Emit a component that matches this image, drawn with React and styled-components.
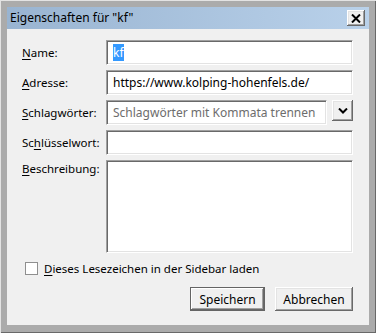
import React from "react";
import styled, { createGlobalStyle } from "styled-components";

const Global = createGlobalStyle`
  html, body {
    margin: 0;
    padding: 0;
    background: #ababab;
  }
  * {
    box-sizing: border-box;
  }
`;

const Window = styled.div`
  width: 376px;
  height: 333px;
  background: #ababab;
  padding: 7px 7px 8px 7px;
  display: flex;
  flex-direction: column;
  box-shadow: inset 1px 1px #e3e3e3, inset -1px -1px #696969;
  font-family: "Noto Sans", "Open Sans", sans-serif;
  font-size: 11.5px;
  color: #000;
`;

const TitleBar = styled.div`
  height: 22px;
  display: flex;
  align-items: center;
  justify-content: space-between;
  padding: 0 4px 0 3px;
  background: linear-gradient(to right, #99b4d1, #b9d1ea);
`;

const Title = styled.span`
  font-size: 12px;
  line-height: 1;
`;

const CloseButton = styled.button`
  width: 18px;
  height: 16px;
  padding: 0;
  margin: 0;
  display: flex;
  align-items: center;
  justify-content: center;
  background: #f0f0f0;
  border: none;
  box-shadow: inset -1px -1px #696969, inset 1px 1px #ffffff,
    inset -2px -2px #a0a0a0, inset 2px 2px #e3e3e3;
`;

const Content = styled.div`
  flex: 1;
  background: #f0f0f0;
  padding: 11px 16px 14px 15px;
  display: flex;
  flex-direction: column;
`;

const Form = styled.div`
  display: grid;
  grid-template-columns: 84px 1fr;
  row-gap: 5px;
`;

const Label = styled.label`
  display: flex;
  align-items: ${(p) => (p.$top ? "flex-start" : "center")};
  padding-top: ${(p) => (p.$top ? "1px" : "0")};
  white-space: nowrap;
`;

const Key = styled.span`
  text-decoration: underline;
  text-underline-offset: 2px;
`;

const Field = styled.div`
  height: ${(p) => p.$h || 25}px;
  background: #fff;
  border-top: 1px solid #a0a0a0;
  border-left: 1px solid #a0a0a0;
  border-bottom: 1px solid #ffffff;
  border-right: 1px solid #ffffff;
  box-shadow: inset 1px 1px #696969, inset -1px -1px #e3e3e3;
  padding: 0 6px;
  display: flex;
  align-items: ${(p) => (p.$h ? "flex-start" : "center")};
  flex: 1;
  min-width: 0;
  white-space: nowrap;
  overflow: hidden;
  font-size: 12px;
  color: ${(p) => (p.$placeholder ? "#6d6d6d" : "#000")};
`;

const Selected = styled.span`
  background: #3399ff;
  color: #fff;
`;

const TagRow = styled.div`
  display: flex;
  gap: 5px;
  align-items: flex-start;
`;

const DropButton = styled.button`
  width: 21px;
  height: 21px;
  padding: 0;
  margin: 0;
  display: flex;
  align-items: center;
  justify-content: center;
  background: #f0f0f0;
  border: none;
  box-shadow: inset -1px -1px #696969, inset 1px 1px #ffffff,
    inset -2px -2px #a0a0a0, inset 2px 2px #e3e3e3;
`;

const CheckRow = styled.div`
  display: flex;
  align-items: center;
  gap: 6px;
  margin: 8px 0 0 3px;
`;

const CheckBox = styled.span`
  width: 13px;
  height: 13px;
  background: #fff;
  border: 1px solid #8f8f8f;
`;

const Buttons = styled.div`
  display: flex;
  justify-content: flex-end;
  gap: 10px;
  margin-top: auto;
`;

const Button = styled.button`
  height: 24px;
  width: ${(p) => p.$w}px;
  padding: 0;
  margin: 0;
  font: inherit;
  font-size: 12px;
  background: #f0f0f0;
  border: none;
  box-shadow: ${(p) =>
    p.$default
      ? "inset 0 0 0 1px #646464, inset -2px -2px #696969, inset 2px 2px #ffffff, inset -3px -3px #a0a0a0"
      : "inset -1px -1px #696969, inset 1px 1px #ffffff, inset -2px -2px #a0a0a0, inset 2px 2px #e3e3e3"};
`;

export default function App() {
  return (
    <>
      <Global />
      <Window>
        <TitleBar>
          <Title>Eigenschaften für "kf"</Title>
          <CloseButton>
            <svg width="10" height="9" viewBox="0 0 10 9">
              <path d="M1 0.5 L9 8.5 M9 0.5 L1 8.5" stroke="#000" strokeWidth="2" />
            </svg>
          </CloseButton>
        </TitleBar>
        <Content>
          <Form>
            <Label>
              <Key>N</Key>ame:
            </Label>
            <Field>
              <Selected>kf</Selected>
            </Field>
            <Label>
              <Key>A</Key>dresse:
            </Label>
            <Field>https://www.kolping-hohenfels.de/</Field>
            <Label>
              <Key>S</Key>chlagwörter:
            </Label>
            <TagRow>
              <Field $placeholder>Schlagwörter mit Kommata trennen</Field>
              <DropButton>
                <svg width="10" height="6" viewBox="0 0 10 6">
                  <path d="M1 0.5 L5 4.5 L9 0.5" stroke="#000" strokeWidth="2" fill="none" />
                </svg>
              </DropButton>
            </TagRow>
            <Label>
              Sc<Key>h</Key>lüsselwort:
            </Label>
            <Field />
            <Label $top>
              <Key>B</Key>eschreibung:
            </Label>
            <Field $h={93} />
          </Form>
          <CheckRow>
            <CheckBox />
            <span>
              <Key>D</Key>ieses Lesezeichen in der Sidebar laden
            </span>
          </CheckRow>
          <Buttons>
            <Button $default $w={75}>Speichern</Button>
            <Button $w={78}>Abbrechen</Button>
          </Buttons>
        </Content>
      </Window>
    </>
  );
}
